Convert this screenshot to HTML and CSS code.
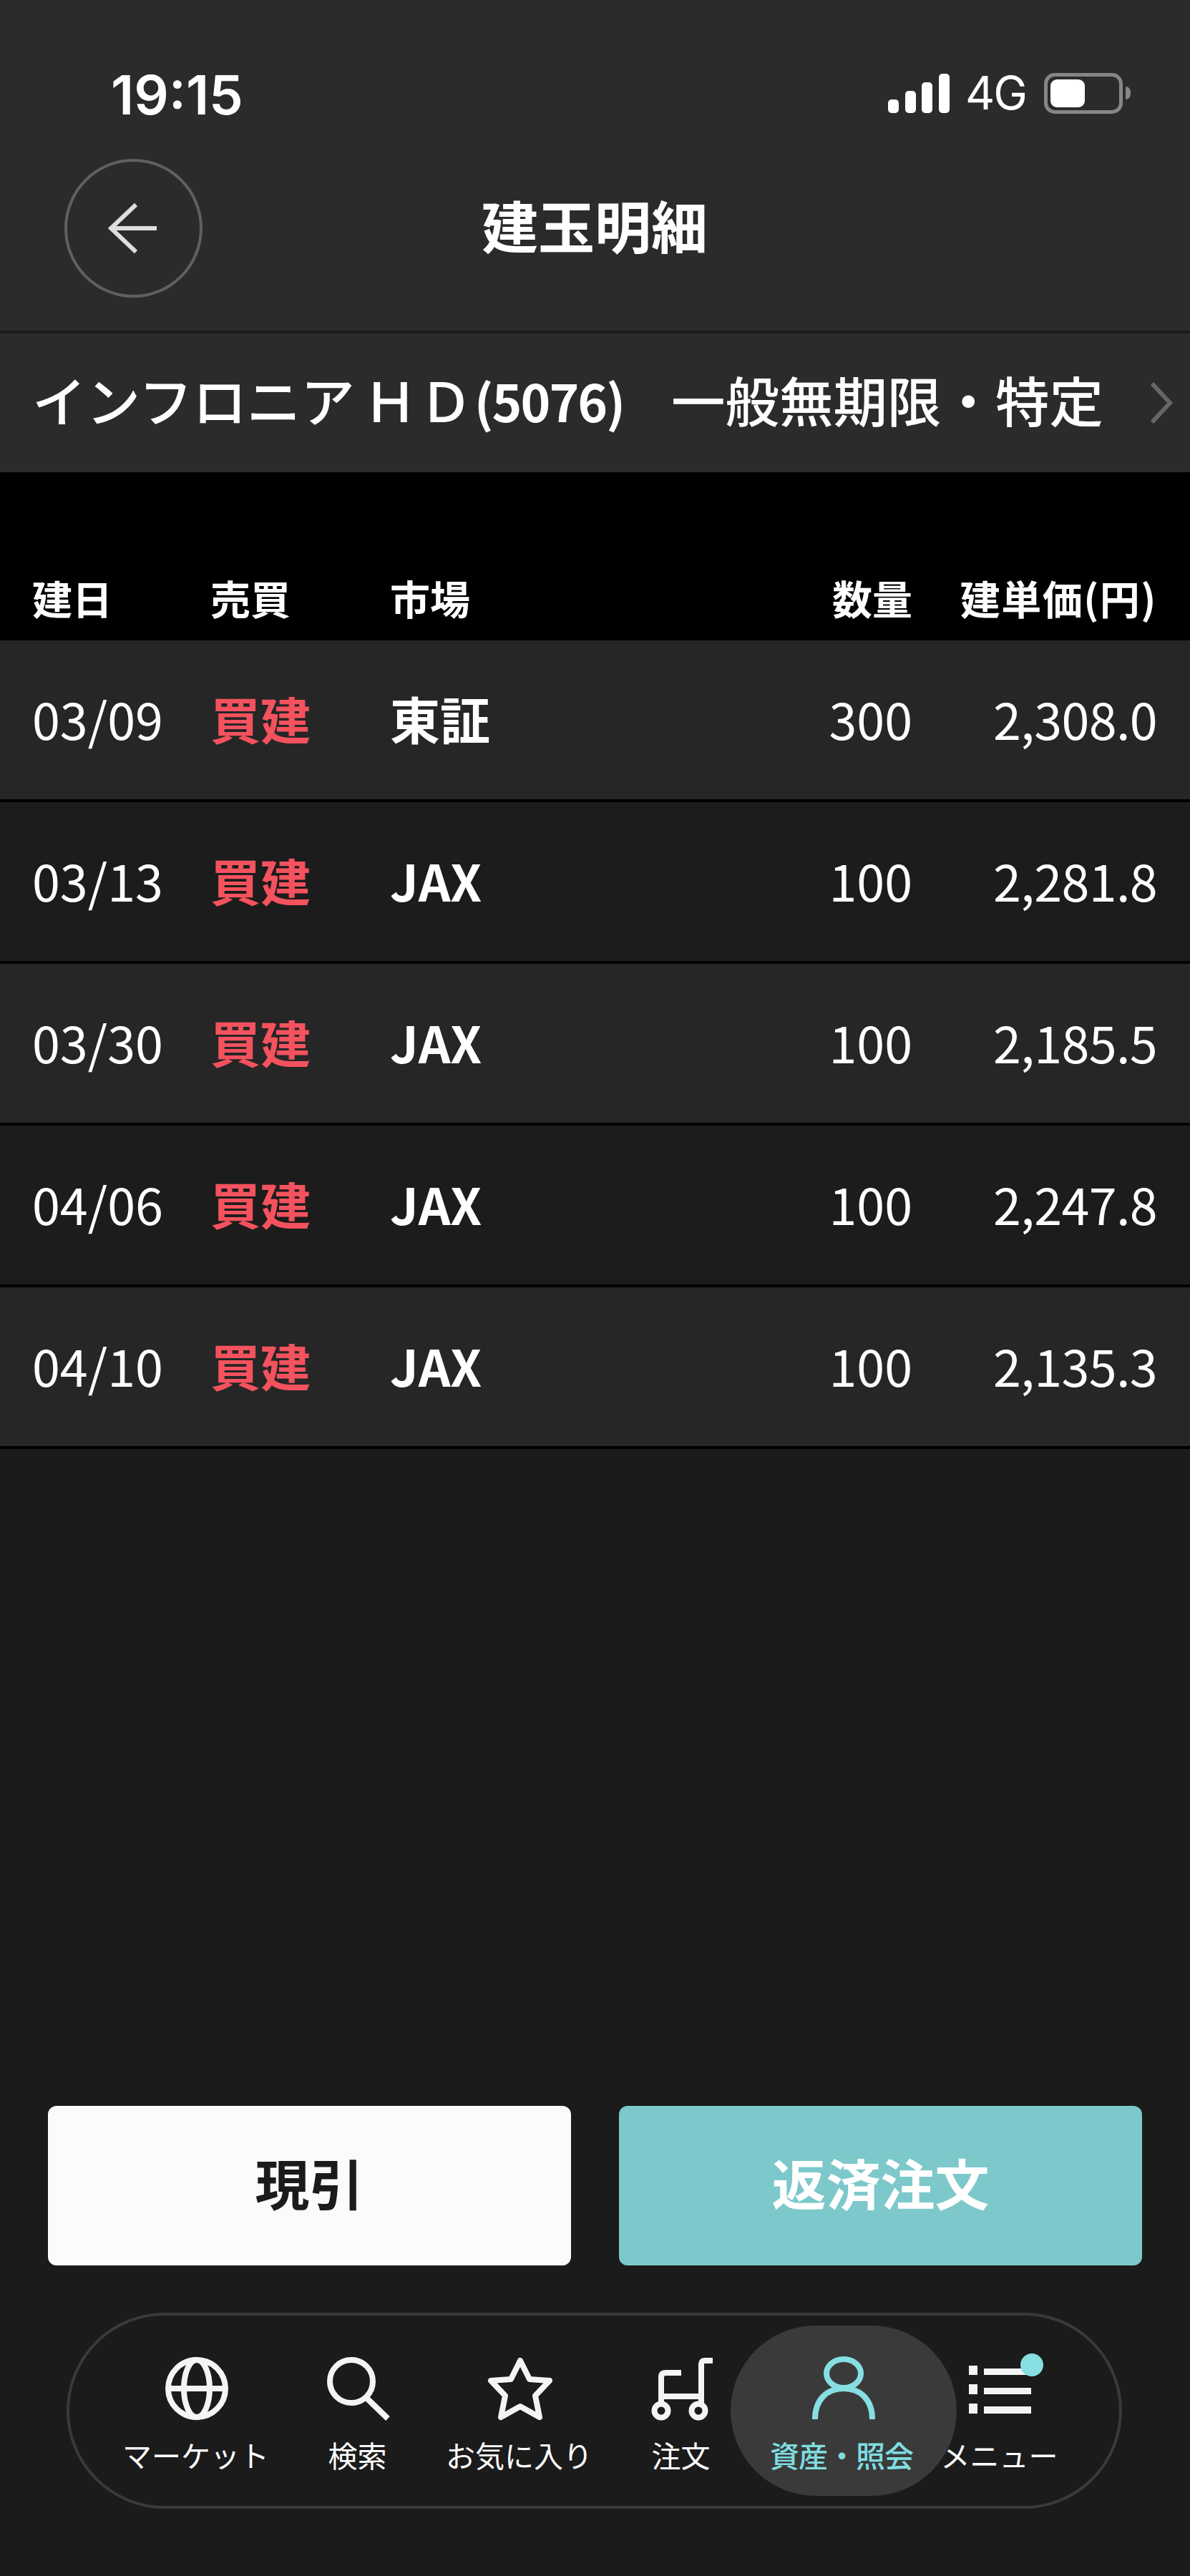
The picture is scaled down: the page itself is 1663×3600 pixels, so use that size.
FILE: index.html
```html
<!DOCTYPE html>
<html lang="ja">
<head>
    <meta charset="UTF-8">
    <meta name="viewport" content="width=device-width, initial-scale=1.0">
    <title>建玉明細</title>
    <link rel="stylesheet" href="styles.css">
</head>
<body>
<div class="app">

    <!-- Status bar + title -->
    <div class="top">
        <div class="status">
            <span class="time">19:15</span>
            <div class="status-right">
                <svg class="signal" width="86" height="55" viewBox="0 0 86 55">
                    <rect x="0" y="36" width="15" height="19" rx="5"/>
                    <rect x="24" y="24" width="15" height="31" rx="5"/>
                    <rect x="47" y="12" width="15" height="43" rx="5"/>
                    <rect x="71" y="0" width="15" height="55" rx="5"/>
                </svg>
                <span class="network">4G</span>
                <div class="battery"><div class="battery-fill"></div></div>
                <div class="battery-nub"></div>
            </div>
        </div>
        <div class="titlebar">
            <div class="back">
                <svg width="72" height="72" viewBox="0 0 72 72">
                    <path d="M39 3 L4 36 L39 69 M4 36 H68" fill="none" stroke="#dedede" stroke-width="6"/>
                </svg>
            </div>
            <h1>建玉明細</h1>
        </div>
    </div>

    <!-- Stock name -->
    <div class="stock">
        <span class="stock-name">インフロニア<span class="stock-hd">ＨＤ</span><span class="stock-code">(5076)</span></span>
        <span class="stock-type">一般無期限・特定</span>
        <svg class="chevron" width="34" height="58" viewBox="0 0 34 58">
            <path d="M4 2 L29 29 L4 56" fill="none" stroke="#666" stroke-width="6"/>
        </svg>
    </div>

    <!-- Table -->
    <div class="table-head">
        <span>建日</span>
        <span>売買</span>
        <span>市場</span>
        <span class="num">数量</span>
        <span class="num price-head">建単価(円)</span>
    </div>
    <div class="rows" id="rows"></div>

    <div class="spacer"></div>

    <!-- Buttons -->
    <div class="actions">
        <button class="btn btn-white">現引</button>
        <button class="btn btn-teal">返済注文</button>
    </div>

    <!-- Bottom navigation -->
    <div class="tabbar">
        <div class="tab">
            <svg width="88" height="88" viewBox="0 0 88 88">
                <circle cx="44" cy="44" r="40"/>
                <ellipse cx="44" cy="44" rx="18" ry="40"/>
                <path d="M4 44 H84"/>
            </svg>
            <span>マーケット</span>
        </div>
        <div class="tab">
            <svg width="88" height="88" viewBox="0 0 88 88">
                <circle cx="34" cy="34" r="30"/>
                <path d="M55 57 L85 86"/>
            </svg>
            <span>検索</span>
        </div>
        <div class="tab">
            <svg width="88" height="88" viewBox="0 0 88 88">
                <path d="M44 5 L57 31 L85 33 L65 54 L71 84 L44 69 L17 84 L23 54 L3 33 L31 31 Z"/>
            </svg>
            <span>お気に入り</span>
        </div>
        <div class="tab">
            <svg width="88" height="88" viewBox="0 0 88 88">
                <path d="M87 5 H76 Q71 5 71 11 V64 M43 22 H21 Q15 22 15 28 V62 M15 55 H71"/>
                <circle cx="15" cy="75" r="9.5"/>
                <circle cx="67" cy="75" r="9.5"/>
            </svg>
            <span>注文</span>
        </div>
        <div class="tab tab-active">
            <div class="tab-bg"></div>
            <svg width="88" height="88" viewBox="0 0 88 88">
                <ellipse cx="44" cy="23" rx="24" ry="20"/>
                <path d="M4 87 C4 60 20 44 44 44 C68 44 84 60 84 87"/>
            </svg>
            <span>資産・照会</span>
        </div>
        <div class="tab">
            <svg class="menu-icon" width="88" height="88" viewBox="0 0 88 88">
                <rect x="0" y="12" width="12" height="13"/>
                <rect x="21" y="16" width="66" height="9"/>
                <rect x="0" y="38" width="12" height="14"/>
                <rect x="21" y="43" width="66" height="9"/>
                <rect x="0" y="65" width="12" height="14"/>
                <rect x="21" y="69" width="66" height="10"/>
                <circle class="dot" cx="88" cy="11" r="16"/>
            </svg>
            <span>メニュー</span>
        </div>
    </div>
</div>

<script>
    // Position rows
    const rows = [
        { date: '03/09', side: '買建', market: '東証', qty: '300', price: '2,308.0' },
        { date: '03/13', side: '買建', market: 'JAX', qty: '100', price: '2,281.8' },
        { date: '03/30', side: '買建', market: 'JAX', qty: '100', price: '2,185.5' },
        { date: '04/06', side: '買建', market: 'JAX', qty: '100', price: '2,247.8' },
        { date: '04/10', side: '買建', market: 'JAX', qty: '100', price: '2,135.3' },
    ];

    const list = document.getElementById('rows');
    rows.forEach(r => {
        const row = document.createElement('div');
        row.classList.add('row');
        row.innerHTML = `
            <span>${r.date}</span>
            <span class="side">${r.side}</span>
            <span class="market">${r.market}</span>
            <span class="num">${r.qty}</span>
            <span class="num price">${r.price}</span>
        `;
        list.appendChild(row);
    });
</script>
</body>
</html>
```

FILE: styles.css
```css
body {
    font-family: "Noto Sans CJK JP", "Noto Sans", sans-serif;
    margin: 0;
    padding: 0;
    background-color: #1b1b1b;
    color: white;
}

.app {
    display: flex;
    flex-direction: column;
    height: 3600px;
    overflow: hidden;
}

.top {
    background-color: #2b2b2b;
    height: 462px;
    box-sizing: border-box;
    padding-top: 90px;
}

.status {
    display: flex;
    justify-content: space-between;
    align-items: center;
    height: 80px;
    padding: 0 83px 0 155px;
}

.time {
    font-family: Inter, sans-serif;
    font-size: 76px;
    font-weight: 600;
    line-height: 80px;
    padding-top: 4px;
}

.status-right {
    display: flex;
    align-items: center;
}

.signal {
    fill: white;
}

.network {
    font-family: Inter, sans-serif;
    font-size: 64px;
    line-height: 60px;
    margin: 0 25px 0 22px;
    letter-spacing: -2px;
}

.battery {
    width: 110px;
    height: 57px;
    box-sizing: border-box;
    border: 5px solid #868686;
    border-radius: 15px;
    padding: 4px;
}

.battery-fill {
    width: 48px;
    height: 100%;
    background-color: white;
    border-radius: 9px;
}

.battery-nub {
    width: 7px;
    height: 18px;
    margin-left: 4px;
    background-color: #868686;
    border-radius: 0 9px 9px 0;
}

.titlebar {
    display: flex;
    align-items: center;
    height: 194px;
    margin-top: 52px;
    padding-left: 90px;
}

.back {
    display: flex;
    align-items: center;
    justify-content: center;
    width: 193px;
    height: 194px;
    box-sizing: border-box;
    border: 4px solid #606060;
    border-radius: 50%;
    flex-shrink: 0;
}

.titlebar h1 {
    margin: 0 0 10px 390px;
    width: 316px;
    font-size: 79px;
    font-weight: 700;
    line-height: 100px;
    white-space: nowrap;
}

.stock {
    display: flex;
    align-items: center;
    height: 194px;
    margin-top: 4px;
    padding-left: 45px;
    background-color: #2b2b2b;
    font-size: 75.5px;
    font-weight: 500;
    white-space: nowrap;
}

.stock-name,
.stock-type {
    padding-bottom: 12px;
}

.stock-name {
    width: 893px;
}

.stock-hd {
    letter-spacing: 2px;
    margin-left: 12px;
    margin-right: 0;
}

.stock-code {
    font-size: 71px;
    font-weight: 700;
    letter-spacing: -2px;
}

.stock-type {
    width: 600px;
}

.chevron {
    margin: 0 0 0 68px;
    flex-shrink: 0;
}

.table-head,
.row {
    display: grid;
    grid-template-columns: 249px 251px 530px 200px 342px;
    align-items: center;
    padding: 0 46px 0 45px;
}

.table-head {
    background-color: black;
    height: 235px;
    box-sizing: border-box;
    padding-top: 120px;
    padding-bottom: 6px;
    font-size: 56px;
    font-weight: 700;
    line-height: 80px;
    white-space: nowrap;
}

.price-head {
    letter-spacing: 1.5px;
}

.row {
    height: 226px;
    box-sizing: border-box;
    border-bottom: 4px solid black;
    padding-bottom: 4px;
    background-color: #262626;
    font-size: 70px;
    line-height: 90px;
}

.row:nth-child(even) {
    background-color: #1c1c1c;
}

.num {
    text-align: right;
}

.price {
    letter-spacing: -0.6px;
}

.side {
    color: #f4525e;
    font-weight: 700;
}

.market {
    font-weight: 700;
}

.spacer {
    flex: 1;
}

.actions {
    display: flex;
    gap: 67px;
    padding: 0 67px;
}

.btn {
    flex: 1;
    height: 223px;
    border: none;
    border-radius: 12px;
    padding: 0 0 12px;
    font-family: inherit;
    font-size: 76px;
    font-weight: 700;
}

.btn-white {
    background-color: #fbfbfb;
    color: #1b1b1b;
}

.btn-teal {
    background-color: #7dc8ca;
    color: white;
}

.tabbar {
    display: grid;
    grid-template-columns: repeat(5, 226px) 212px;
    margin: 66px 95px 94px 93px;
    height: 274px;
    box-sizing: border-box;
    padding: 0 0 0 65px;
    border: 4px solid #3a3a3a;
    border-radius: 137px;
    font-size: 41px;
}

.tab {
    position: relative;
    display: flex;
    flex-direction: column;
    align-items: center;
    padding-top: 58px;
    white-space: nowrap;
    line-height: 56px;
}

.tab svg {
    position: relative;
    fill: none;
    stroke: #f4f4f4;
    stroke-width: 8;
    stroke-linejoin: round;
    overflow: visible;
    margin-bottom: 20px;
}

.tab span {
    position: relative;
    margin-right: 3px;
}

.tab-active {
    color: #7fdde0;
    font-weight: 500;
}

.tab-active span {
    letter-spacing: -1px;
    margin-right: 6px;
}

.tab-active svg {
    stroke: #86dfe2;
}

.tab-bg {
    position: absolute;
    top: 14px;
    left: -45px;
    width: 316px;
    height: 238px;
    background-color: #3a3a3a;
    border-radius: 120px;
}

.menu-icon {
    stroke: none !important;
    fill: #f4f4f4 !important;
}

.menu-icon .dot {
    fill: #87dfe2;
}
```
